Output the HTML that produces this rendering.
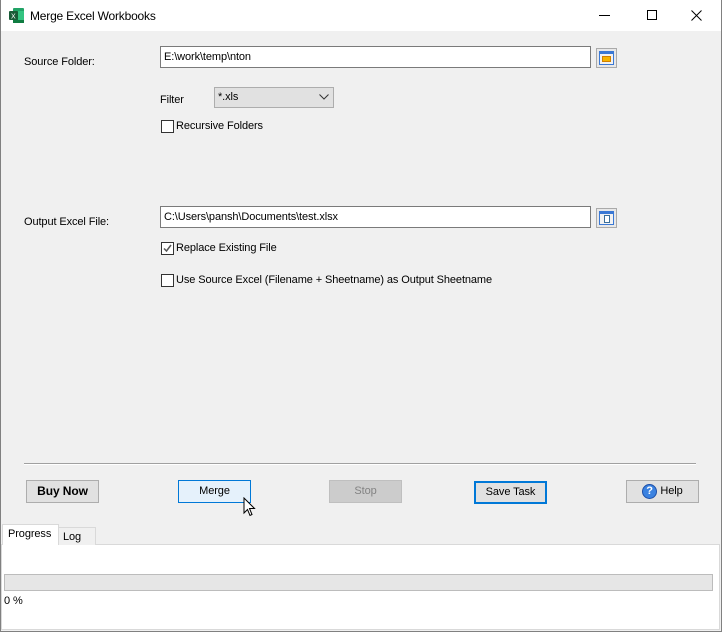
<!DOCTYPE html>
<html><head><meta charset="utf-8"><style>
*{margin:0;padding:0;box-sizing:border-box}
body{width:722px;height:632px;background:#f0f0f0;font-family:"Liberation Sans",sans-serif;font-size:11px;letter-spacing:-0.1px;color:#000;position:relative;overflow:hidden}
.a{position:absolute}
.win{left:0;top:0;width:722px;height:632px;border:1px solid #808080;border-top:none}
.title{left:0;top:0;width:722px;height:31px;background:#fff}
.inp{background:#fff;border:1px solid #7a7a7a;height:22px;padding:4px 3px;line-height:13px}
.cb{width:13px;height:13px;border:1px solid #333;background:#fff}
.btn{height:23px;width:73px;border:1px solid #adadad;background:#e1e1e1;text-align:center;line-height:21px}
</style></head><body>
<div class="a title"></div>
<div class="a win"></div>
<svg class="a" style="left:8px;top:7px" width="17" height="17" viewBox="0 0 17 17">
<rect x="5" y="1" width="11" height="15" rx="1" fill="#21a366"/>
<rect x="5" y="8" width="11" height="8" fill="#107c41"/>
<rect x="10" y="4" width="6" height="9" fill="#33c481"/>
<rect x="1" y="4" width="9" height="9" rx="1" fill="#185c37"/>
<text x="3" y="11.5" font-size="7" fill="#fff" font-family="Liberation Sans">X</text>
</svg>
<div class="a" style="left:30px;top:9px;font-size:12px;letter-spacing:-0.2px">Merge Excel Workbooks</div>
<div class="a" style="left:599px;top:15px;width:11px;height:1px;background:#000"></div>
<div class="a" style="left:647px;top:10px;width:10px;height:10px;border:1px solid #000"></div>
<svg class="a" style="left:691px;top:10px" width="11" height="11"><path d="M0.5 0.5L10.5 10.5M10.5 0.5L0.5 10.5" stroke="#000" stroke-width="1"/></svg>

<div class="a" style="left:24px;top:56px">Source Folder:</div>
<div class="a inp" style="left:160px;top:46px;width:431px">E:\work\temp\nton</div>
<div class="a" style="left:596px;top:48px;width:21px;height:20px;border:1px solid #aaa;background:#e8e8e8"><div class="a" style="left:2px;top:2px;width:15px;height:14px;background:#3a78d4"><div class="a" style="left:1px;top:3px;width:13px;height:10px;background:#f2f2f2"><div class="a" style="left:2px;top:2px;width:9px;height:6px;background:#f5b400;border:1px solid #d08000"></div></div></div></div>

<div class="a" style="left:160px;top:94px">Filter</div>
<div class="a" style="left:214px;top:87px;width:120px;height:21px;border:1px solid #adadad;background:#e1e1e1;padding:3px 3px">*.xls</div>
<svg class="a" style="left:319px;top:94px" width="10" height="6"><path d="M0.5 0.5L5 5L9.5 0.5" stroke="#333" fill="none"/></svg>
<div class="a cb" style="left:161px;top:120px"></div>
<div class="a" style="left:176px;top:120px">Recursive Folders</div>

<div class="a" style="left:24px;top:216px">Output Excel File:</div>
<div class="a inp" style="left:160px;top:206px;width:431px">C:\Users\pansh\Documents\test.xlsx</div>
<div class="a" style="left:596px;top:208px;width:21px;height:20px;border:1px solid #aaa;background:#e8e8e8"><div class="a" style="left:2px;top:2px;width:15px;height:14px;background:#3a78d4"><div class="a" style="left:1px;top:3px;width:13px;height:10px;background:#f2f2f2"><div class="a" style="left:4px;top:1px;width:6px;height:8px;background:#fff;border:1px solid #3a6e9a"></div></div></div></div>
<div class="a cb" style="left:161px;top:242px;border-color:#333"></div>
<svg class="a" style="left:162px;top:243px" width="11" height="11"><path d="M2 5.5L4.5 8L9 2" stroke="#555" stroke-width="1.5" fill="none"/></svg>
<div class="a" style="left:176px;top:242px">Replace Existing File</div>
<div class="a cb" style="left:161px;top:274px"></div>
<div class="a" style="left:176px;top:274px">Use Source Excel (Filename  + Sheetname) as Output Sheetname</div>

<div class="a" style="left:24px;top:463px;width:672px;height:1px;background:#a0a0a0"></div>
<div class="a" style="left:24px;top:464px;width:672px;height:1px;background:#fff"></div>

<div class="a btn" style="left:26px;top:480px;font-weight:bold;font-size:12px">Buy Now</div>
<div class="a btn" style="left:178px;top:480px;background:#e5f1fb;border-color:#0078d7">Merge</div>
<svg class="a" style="left:243px;top:497px" width="14" height="22"><path d="M1 1L1 16L4.5 12.5L7 18.5L9 17.5L6.5 11.5L11.5 11.5Z" fill="#fff" stroke="#000"/></svg>
<div class="a btn" style="left:329px;top:480px;background:#cccccc;border-color:#bfbfbf;color:#838383">Stop</div>
<div class="a btn" style="left:474px;top:481px;border:2px solid #0078d7;line-height:19px">Save Task</div>
<div class="a btn" style="left:626px;top:480px;padding-left:18px">Help</div>
<div class="a" style="left:642px;top:484px;width:15px;height:15px;border-radius:50%;background:#3b82e0;border:1px solid #1d4fa8;color:#fff;font-size:11px;font-weight:bold;text-align:center;line-height:13px">?</div>

<div class="a" style="left:1px;top:544px;width:719px;height:86px;background:#fff;border:1px solid #d9d9d9"></div>
<div class="a" style="left:58px;top:527px;width:38px;height:18px;border:1px solid #d9d9d9;border-bottom:none;background:#f0f0f0;padding:3px 0 0 4px">Log</div>
<div class="a" style="left:2px;top:524px;width:57px;height:21px;border:1px solid #d9d9d9;border-bottom:none;background:#fff;padding:3px 0 0 5px">Progress</div>
<div class="a" style="left:4px;top:574px;width:709px;height:17px;background:#e6e6e6;border:1px solid #bcbcbc"></div>
<div class="a" style="left:4px;top:595px">0 %</div>
</body></html>
